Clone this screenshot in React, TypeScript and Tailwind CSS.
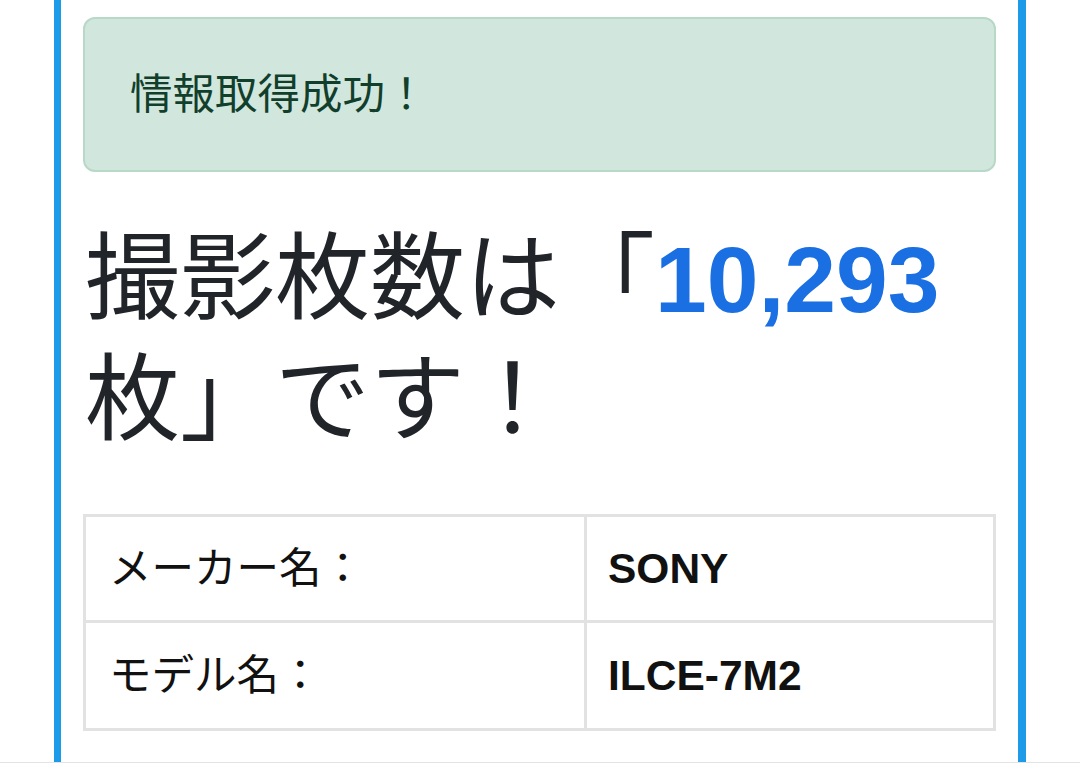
import React from "react";

export default function App() {
  const font = { fontFamily: '"Liberation Sans", "Noto Sans CJK JP", sans-serif' };
  return (
    <div className="w-[1080px] h-[764px] overflow-hidden bg-white flex flex-col" style={font}>
      <div className="h-[762px] flex">
        <div className="ml-[54px] w-[972px] h-full border-l-[7px] border-r-[8px] border-[#1e9be8] px-[22px] pt-[17px]">
          <div className="h-[155px] rounded-[12px] border-2 border-[#b8d8c8] bg-[#d1e7dd] flex items-center pl-[45px] text-[42.5px] text-[#123f2c]">
            情報取得成功！
          </div>
          <h2 className="mt-[47px] ml-[2px] text-[95px] leading-[120px] text-[#212529] font-normal">
            撮影枚数は「<span className="font-bold text-[93px] text-[#1a6fe2]">10,293</span>枚」です！
          </h2>
          <div className="mt-[54px] w-[913px] border-[3px] border-[#e2e2e2] grid grid-cols-[501px_1fr] text-[42.5px] text-[#111]">
            <div className="h-[106px] flex items-center pl-[23px] border-r-[3px] border-b-[3px] border-[#e2e2e2]">メーカー名：</div>
            <div className="h-[106px] flex items-center pl-[21px] border-b-[3px] border-[#e2e2e2] font-bold">SONY</div>
            <div className="h-[105px] flex items-center pl-[23px] border-r-[3px] border-[#e2e2e2]">モデル名：</div>
            <div className="h-[105px] flex items-center pl-[21px] font-bold">ILCE-7M2</div>
          </div>
        </div>
      </div>
      <div className="h-px bg-[#e4e4e4]" />
    </div>
  );
}
